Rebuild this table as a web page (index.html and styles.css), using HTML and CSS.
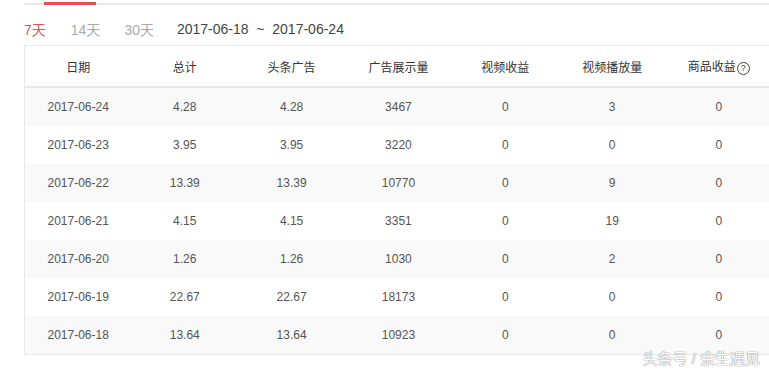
FILE: index.html
```html
<!DOCTYPE html>
<html lang="zh-CN">
<head>
    <meta charset="UTF-8">
    <title>收益统计</title>
    <link rel="stylesheet" href="styles.css">
</head>
<body>
    <div class="page">
        <div class="top-line"><span class="top-active"></span></div>
        <div class="range-bar">
            <span class="range-tab active">7天</span>
            <span class="range-tab">14天</span>
            <span class="range-tab">30天</span>
            <span class="range-dates">2017-06-18 &nbsp;~&nbsp; 2017-06-24</span>
        </div>
        <table class="data-table">
            <thead>
                <tr>
                    <th>日期</th>
                    <th>总计</th>
                    <th>头条广告</th>
                    <th>广告展示量</th>
                    <th>视频收益</th>
                    <th>视频播放量</th>
                    <th>商品收益<span class="help">?</span></th>
                </tr>
            </thead>
            <tbody>
                <tr><td>2017-06-24</td><td>4.28</td><td>4.28</td><td>3467</td><td>0</td><td>3</td><td>0</td></tr>
                <tr><td>2017-06-23</td><td>3.95</td><td>3.95</td><td>3220</td><td>0</td><td>0</td><td>0</td></tr>
                <tr><td>2017-06-22</td><td>13.39</td><td>13.39</td><td>10770</td><td>0</td><td>9</td><td>0</td></tr>
                <tr><td>2017-06-21</td><td>4.15</td><td>4.15</td><td>3351</td><td>0</td><td>19</td><td>0</td></tr>
                <tr><td>2017-06-20</td><td>1.26</td><td>1.26</td><td>1030</td><td>0</td><td>2</td><td>0</td></tr>
                <tr><td>2017-06-19</td><td>22.67</td><td>22.67</td><td>18173</td><td>0</td><td>0</td><td>0</td></tr>
                <tr><td>2017-06-18</td><td>13.64</td><td>13.64</td><td>10923</td><td>0</td><td>0</td><td>0</td></tr>
            </tbody>
        </table>
        <div class="watermark">头条号 / 余生遇见</div>
    </div>
</body>
</html>
```

FILE: styles.css
```css
html, body {
    margin: 0;
    padding: 0;
    background-color: #fff;
    overflow: hidden;
}

body {
    font-family: "Liberation Sans", Arial, "Noto Sans CJK SC", sans-serif;
    color: #555;
}

.page {
    position: relative;
    width: 769px;
    height: 370px;
    padding-left: 24px;
    box-sizing: border-box;
}

.top-line {
    position: relative;
    margin-top: 3px;
    height: 2px;
    background-color: #e8e8e8;
    width: 760px;
}

.top-active {
    position: absolute;
    left: 20px;
    top: -1px;
    width: 52px;
    height: 3px;
    background-color: #e0514f;
}

.range-bar {
    display: flex;
    align-items: center;
    height: 40px;
    padding-top: 8px;
    box-sizing: border-box;
    font-size: 14px;
}

.range-tab {
    color: #aaa;
    margin-right: 24px;
}

.range-tab.active {
    color: #e0514f;
    margin-right: 25px;
}

.range-dates {
    color: #444;
    margin-left: -1px;
}

.data-table {
    width: 749px;
    border-collapse: collapse;
    table-layout: fixed;
    border: 1px solid #e8e8e8;
    font-size: 12px;
}

.data-table th {
    height: 38px;
    font-weight: normal;
    color: #333;
    text-align: center;
    border-bottom: 2px solid #e8e8e8;
    background-color: #fff;
}

.data-table td {
    height: 38px;
    padding: 0;
    text-align: center;
    color: #555;
}

.data-table tbody tr:nth-child(odd) td {
    background-color: #f9f9f9;
}

.help {
    display: inline-block;
    width: 11px;
    height: 11px;
    line-height: 11px;
    border: 1px solid #444;
    border-radius: 50%;
    font-size: 9px;
    color: #444;
    margin-left: 1px;
    vertical-align: 0;
}

.watermark {
    position: absolute;
    right: 9px;
    top: 344px;
    font-size: 15px;
    color: #fff;
    text-shadow: 0 0 1px #999, 0 0 1px #999, 0 0 1px #aaa;
}
```
